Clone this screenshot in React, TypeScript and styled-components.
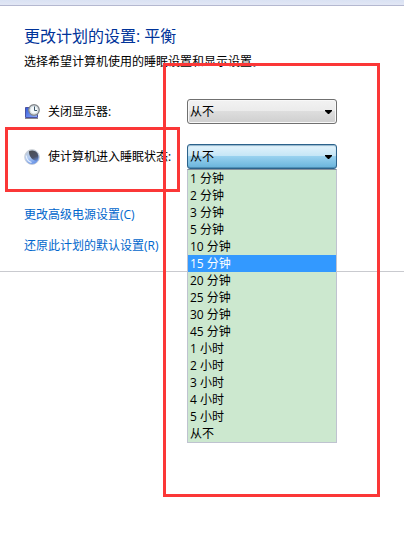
import React, { useState } from "react";
import styled, { createGlobalStyle, css } from "styled-components";

const GlobalStyle = createGlobalStyle`
  *, *::before, *::after { box-sizing: border-box; }
  body {
    margin: 0;
    background: #fff;
    color: #000;
    font: 12px/17px "Open Sans", "Noto Sans CJK SC", sans-serif;
  }
`;

const Page = styled.div`
  position: relative;
  min-height: 100vh;
`;

const TitleStrip = styled.div`
  height: 6px;
  background: linear-gradient(#dae2f3, #e2e7f5);
  border-bottom: 1px solid #b4b8d0;
`;

const Content = styled.main`
  padding: 19px 24px 17px;
  border-bottom: 1px solid #c9cacf;
`;

const Title = styled.h1`
  margin: 0;
  font-size: 16px;
  line-height: 22px;
  font-weight: 400;
  color: #003399;
`;

const Lead = styled.p`
  margin: 6px 0 0;
`;

const Settings = styled.form`
  display: grid;
  gap: 20px;
  margin-top: 29px;
`;

const SettingRow = styled.div`
  display: grid;
  grid-template-columns: 16px 131px minmax(0, 150px);
  align-items: center;
  column-gap: 8px;
`;

const SettingLabel = styled.label`
  white-space: nowrap;
`;

const Combo = styled.div`
  position: relative;
  display: grid;
`;

const ComboSelect = styled.select<{ $open?: boolean }>`
  appearance: none;
  width: 100%;
  height: 25px;
  margin: 0;
  padding: 0 20px 0 2px;
  border: 1px solid #707070;
  border-radius: 3px;
  outline: none;
  background: linear-gradient(#f2f2f2 0%, #ebebeb 49%, #dddddd 50%, #cfcfcf 100%);
  box-shadow: inset 0 0 0 1px #f8f8f8;
  color: #000;
  font: inherit;
  ${(p) =>
    p.$open &&
    css`
      border-color: #2c628b;
      background: linear-gradient(#e5f4fc 0%, #c4e5f6 49%, #98d1ef 50%, #68b3db 100%);
      box-shadow: inset 0 1px 1px #8fb4cb, inset 0 -1px 0 #4f8fb5;
    `}
`;

const ComboArrow = styled.svg`
  position: absolute;
  right: 5px;
  top: 11px;
  width: 7px;
  height: 4px;
  pointer-events: none;
`;

const OptionList = styled.ul`
  position: absolute;
  z-index: 1;
  top: 100%;
  left: 0;
  right: 0;
  margin: 0;
  padding: 0;
  border: 1px solid #bfc3d0;
  border-top-color: #84909c;
  background: #cce8cf;
  list-style: none;
`;

const OptionItem = styled.li<{ $active: boolean }>`
  height: 17px;
  padding-left: 2px;
  background: ${(p) => (p.$active ? "#3399ff" : "transparent")};
  color: ${(p) => (p.$active ? "#fff" : "#000")};
  cursor: default;
`;

const Links = styled.nav`
  display: grid;
  justify-items: start;
  gap: 14px;
  margin-top: 37px;
`;

const TextLink = styled.a`
  color: #0066cc;
  text-decoration: none;
`;

const Highlight = styled.div`
  position: absolute;
  z-index: 2;
  border: 3px solid #fb3737;
  pointer-events: none;
`;

const SleepHighlight = styled(Highlight)`
  left: 5px;
  top: 127px;
  width: 175px;
  height: 65px;
`;

const OptionsHighlight = styled(Highlight)`
  left: 163px;
  top: 63px;
  width: 217px;
  height: 434px;
`;

const DisplayIcon = () => (
  <svg width="16" height="16" viewBox="0 0 16 16" aria-hidden="true">
    <defs>
      <linearGradient id="screen" x1="0" y1="0" x2="1" y2="1">
        <stop offset="0" stopColor="#3157d8" />
        <stop offset="1" stopColor="#8fb2ff" />
      </linearGradient>
    </defs>
    <path d="M1.5 3.5h12v10h-12z" fill="url(#screen)" stroke="#4a52a0" />
    <path d="M1 14.5h13" stroke="#8a8a90" />
    <circle cx="10" cy="6" r="5.2" fill="#e4eaee" stroke="#85898e" strokeWidth="1.4" />
    <circle cx="10" cy="6" r="4" fill="#f4f9fc" stroke="#c3ccd2" strokeWidth="0.6" />
    <path d="M10.500 2.500v4h2.500" fill="none" stroke="#3b5568" />
  </svg>
);

const MoonIcon = () => (
  <svg width="16" height="16" viewBox="0 0 16 16" aria-hidden="true">
    <defs>
      <linearGradient id="moon" x1="0.2" y1="0" x2="0.6" y2="1">
        <stop offset="0" stopColor="#c3cbd2" />
        <stop offset="0.5" stopColor="#b5cdf2" />
        <stop offset="1" stopColor="#5f8ee8" />
      </linearGradient>
      <linearGradient id="shade" x1="0.3" y1="0" x2="0.7" y2="1">
        <stop offset="0" stopColor="#4b4e55" />
        <stop offset="0.65" stopColor="#4c5369" />
        <stop offset="1" stopColor="#6285cc" />
      </linearGradient>
    </defs>
    <circle cx="8" cy="8" r="7.4" fill="url(#moon)" stroke="#c9cdd3" strokeWidth="0.8" />
    <path d="M5 2.2C8 0.9 12 1.5 13.6 4.6c1.3 2.6 0.9 5.4-0.6 7.2C9 12 4.6 7.5 5 2.2z" fill="url(#shade)" />
    <path d="M2.2 6.5c0.2 3.5 2.3 6 5.3 7" fill="none" stroke="#e6f0ff" strokeWidth="1.2" />
  </svg>
);

const Arrow = () => (
  <ComboArrow viewBox="0 0 7 4" aria-hidden="true">
    <path d="M0 0h7v1L4 4H3L0 1z" fill="#000" />
  </ComboArrow>
);

const minutes = [1, 2, 3, 5, 10, 15, 20, 25, 30, 45].map((n) => `${n} 分钟`);
const hours = [1, 2, 3, 4, 5].map((n) => `${n} 小时`);
const durations = [...minutes, ...hours, "从不"];

const durationOptions = durations.map((d) => (
  <option key={d} value={d}>
    {d}
  </option>
));

export default function App() {
  const [display, setDisplay] = useState("从不");
  const [sleep, setSleep] = useState("从不");
  const [open, setOpen] = useState(true);
  const [active, setActive] = useState("15 分钟");

  return (
    <Page>
      <GlobalStyle />
      <TitleStrip />
      <Content>
        <Title>更改计划的设置: 平衡</Title>
        <Lead>选择希望计算机使用的睡眠设置和显示设置。</Lead>
        <Settings>
          <SettingRow>
            <DisplayIcon />
            <SettingLabel htmlFor="display-off">关闭显示器:</SettingLabel>
            <Combo>
              <ComboSelect id="display-off" value={display} onChange={(e) => setDisplay(e.target.value)}>
                {durationOptions}
              </ComboSelect>
              <Arrow />
            </Combo>
          </SettingRow>
          <SettingRow>
            <MoonIcon />
            <SettingLabel htmlFor="sleep-after">使计算机进入睡眠状态:</SettingLabel>
            <Combo>
              <ComboSelect
                id="sleep-after"
                $open={open}
                value={sleep}
                onChange={(e) => setSleep(e.target.value)}
                onMouseDown={(e) => {
                  e.preventDefault();
                  setOpen(!open);
                }}
              >
                {durationOptions}
              </ComboSelect>
              <Arrow />
              {open && (
                <OptionList role="listbox" aria-label="使计算机进入睡眠状态">
                  {durations.map((d) => (
                    <OptionItem
                      key={d}
                      role="option"
                      aria-selected={d === sleep}
                      $active={d === active}
                      onMouseEnter={() => setActive(d)}
                      onClick={() => {
                        setSleep(d);
                        setOpen(false);
                      }}
                    >
                      {d}
                    </OptionItem>
                  ))}
                </OptionList>
              )}
            </Combo>
          </SettingRow>
        </Settings>
        <Links>
          <TextLink href="#advanced">更改高级电源设置(C)</TextLink>
          <TextLink href="#restore">还原此计划的默认设置(R)</TextLink>
        </Links>
      </Content>
      <SleepHighlight />
      <OptionsHighlight />
    </Page>
  );
}
